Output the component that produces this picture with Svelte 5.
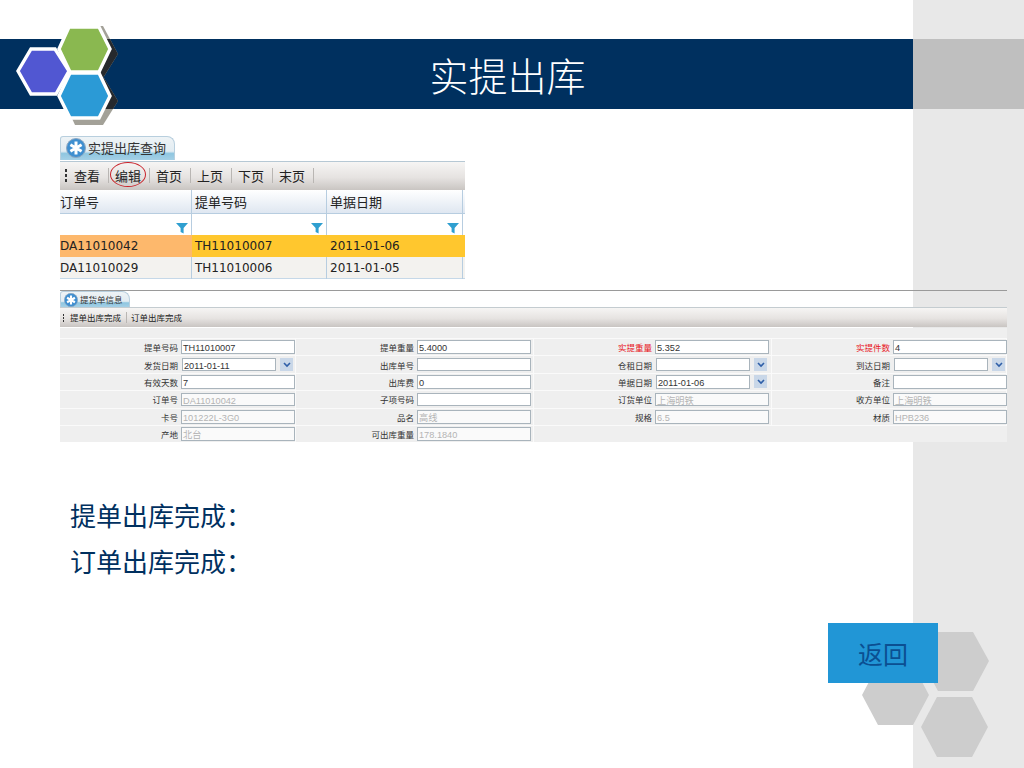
<script>
	const pager = ['查看', '编辑', '首页', '上页', '下页', '末页'];
	const columns = ['订单号', '提单号码', '单据日期'];
	const orders = [
		['DA11010042', 'TH11010007', '2011-01-06'],
		['DA11010029', 'TH11010006', '2011-01-05']
	];

	// kind: text (default), date, off (greyed out)
	const fields = [
		{ label: '提单号码', value: 'TH11010007' },
		{ label: '提单重量', value: '5.4000' },
		{ label: '实提重量', value: '5.352', red: true },
		{ label: '实提件数', value: '4', red: true },
		{ label: '发货日期', value: '2011-01-11', kind: 'date' },
		{ label: '出库单号', value: '' },
		{ label: '仓租日期', value: '', kind: 'date' },
		{ label: '到达日期', value: '', kind: 'date' },
		{ label: '有效天数', value: '7' },
		{ label: '出库费', value: '0' },
		{ label: '单据日期', value: '2011-01-06', kind: 'date' },
		{ label: '备注', value: '' },
		{ label: '订单号', value: 'DA11010042', kind: 'off' },
		{ label: '子项号码', value: '' },
		{ label: '订货单位', value: '上海明铁', kind: 'off' },
		{ label: '收方单位', value: '上海明铁', kind: 'off' },
		{ label: '卡号', value: '101222L-3G0', kind: 'off' },
		{ label: '品名', value: '高线', kind: 'off' },
		{ label: '规格', value: '6.5', kind: 'off' },
		{ label: '材质', value: 'HPB236', kind: 'off' },
		{ label: '产地', value: '北台', kind: 'off' },
		{ label: '可出库重量', value: '178.1840', kind: 'off' },
		{ label: '', value: null },
		{ label: '', value: null }
	];
</script>

{#snippet tabIcon(size)}
	<svg class="tab-icon" width={size} height={size} viewBox="0 0 20 20">
		<circle cx="10" cy="10" r="9.5" fill="#3f8fd0" stroke="#8fa8c0" />
		<path d="M10 3.5v13M4.4 6.8l11.2 6.4M15.6 6.8L4.4 13.2" stroke="#fff" stroke-width="3" />
	</svg>
{/snippet}

{#snippet funnel()}
	<svg class="funnel" width="12" height="12" viewBox="0 0 12 12">
		<path d="M0 1h12L7.6 6v5.5L4.6 10V6z" fill="#2f9fd0" />
	</svg>
{/snippet}

{#snippet grip()}
	<span class="grip"><i></i><i></i><i></i></span>
{/snippet}

<div class="slide">
	<div class="sidebar"></div>

	<svg class="hexes" width="1024" height="768" viewBox="0 0 1024 768">
		<g fill="#cdcdcd">
			<polygon points="922,661 938,632 973,632 989,661 973,691 938,691" />
			<polygon points="862,695 878,665 913,665 929,695 913,725 878,725" />
			<polygon points="921,727 937,697 972,697 988,727 972,757 937,757" />
		</g>
	</svg>

	<header class="band">
		<h1>实提出库</h1>
		<div class="band-end"></div>
	</header>

	<svg class="logo" width="125" height="130" viewBox="0 0 125 130">
		<defs>
			<clipPath id="on-band"><rect x="0" y="39" width="125" height="70" /></clipPath>
		</defs>
		<g fill="#a3a198">
			<polygon points="73,26 103,26 118,54 103,78 90,78 75,54" />
			<polygon points="75,78 104,78 118,101 103,125 75,125 64,101" />
		</g>
		<g fill="#26292d" clip-path="url(#on-band)">
			<polygon points="73,26 103,26 118,54 103,78 90,78 75,54" />
			<polygon points="75,78 104,78 118,101 103,125 75,125 64,101" />
		</g>
		<g stroke="#fff" stroke-width="3.4" stroke-linejoin="miter">
			<polygon points="31,49 55,49 69,71 56,94 31,94 18,71" fill="#5157d2" />
			<polygon points="69,27 99,27 110,49 99,72 70,72 59,49" fill="#8ab850" />
			<polygon points="70,73 99,73 110,96 99,118 70,118 59,96" fill="#2b9ad6" />
		</g>
	</svg>

	<main class="content">
		<section class="query">
			<div class="tab">
				{@render tabIcon(20)}
				<span>实提出库查询</span>
			</div>
			<div class="toolbar">
				{@render grip()}
				{#each pager as item}
					<span class="tool" class:marked={item === '编辑'}>{item}</span>
				{/each}
			</div>
			<div class="grid head">
				{#each columns as name}
					<div class="cell">{name}</div>
				{/each}
			</div>
			<div class="grid filter">
				{#each columns as name}
					<div class="cell">{@render funnel()}</div>
				{/each}
			</div>
			{#each orders as row, r}
				<div class="grid order" class:selected={r === 0}>
					{#each row as value}
						<div class="cell">{value}</div>
					{/each}
				</div>
			{/each}
		</section>

		<section class="detail">
			<div class="tab-strip">
				<div class="tab small">
					{@render tabIcon(14)}
					<span>提货单信息</span>
				</div>
			</div>
			<div class="toolbar small">
				{@render grip()}
				<span class="tool">提单出库完成</span>
				<span class="tool">订单出库完成</span>
			</div>
			<div class="form">
				<div class="form-top"></div>
				{#each fields as f}
					<div class="field" class:empty={f.value === null}>
						<span class="label" class:red={f.red}>{f.label}</span>
						{#if f.value !== null}
							<span class="input" class:off={f.kind === 'off'} class:date={f.kind === 'date'}>{f.value}</span>
							{#if f.kind === 'date'}
								<span class="drop">
									<svg width="8" height="6" viewBox="0 0 8 6">
										<path d="M1 1l3 3 3-3" fill="none" stroke="#2f5fa8" stroke-width="1.6" />
									</svg>
								</span>
							{/if}
						{/if}
					</div>
				{/each}
			</div>
		</section>

		<div class="notes">
			<p>提单出库完成：</p>
			<p>订单出库完成：</p>
		</div>

		<div class="actions">
			<button type="button">返回</button>
		</div>
	</main>
</div>

<style>
	:global(body) {
		margin: 0;
		background: #fff;
	}

	.slide {
		position: relative;
		width: 1024px;
		height: 768px;
		overflow: hidden;
		padding-top: 39px;
		box-sizing: border-box;
		font-family: "Noto Sans CJK SC", "Liberation Sans", sans-serif;
		color: #222;
	}

	.sidebar {
		position: absolute;
		top: 0;
		right: 0;
		bottom: 0;
		width: 111px;
		background: #e8e8e8;
	}

	.hexes {
		position: absolute;
		top: 0;
		left: 0;
	}

	.logo {
		position: absolute;
		top: 0;
		left: 0;
	}

	.band {
		position: relative;
		display: flex;
		height: 70px;
	}

	.band h1 {
		flex: 1;
		margin: 0;
		padding-left: 102px;
		background: #00305f;
		color: #fff;
		font-size: 39px;
		font-weight: 300;
		line-height: 70px;
		text-align: center;
	}

	.band-end {
		width: 111px;
		background: #bfbfbf;
	}

	.content {
		position: relative;
		padding: 27px 0 0 60px;
	}

	/* tabs */
	.tab {
		display: flex;
		align-items: center;
		gap: 2px;
		width: 115px;
		height: 24px;
		box-sizing: border-box;
		padding: 0 0 2px 5px;
		border: 1px solid #b8cfde;
		border-bottom: 0;
		border-radius: 3px 8px 0 0;
		background: linear-gradient(#eef3f6 0%, #e2ecf2 62%, #8fc6e0 72%, #a4d0e6 100%);
		font-size: 13px;
		line-height: 1;
		color: #333;
	}

	.tab.small {
		width: 70px;
		height: 16px;
		padding: 0 0 0 3px;
		font-size: 8.5px;
	}

	.tab-icon {
		flex: none;
	}

	.tab-strip {
		border-top: 1px solid #9a9a9a;
		border-bottom: 1px solid #c4ccd0;
	}

	/* toolbars */
	.toolbar {
		display: flex;
		align-items: center;
		height: 29px;
		margin-top: 1px;
		padding: 0 0 2px 5px;
		border-top: 1px solid #b6c8d4;
		box-sizing: border-box;
		background: linear-gradient(#f6f5f4, #e6e3e1 55%, #c9c5c2);
		font-size: 13px;
	}

	.toolbar.small {
		height: 19px;
		margin-top: 0;
		padding: 0 0 0 3px;
		border-top: 0;
		font-size: 8.5px;
	}

	.grip {
		display: flex;
		flex-direction: column;
		gap: 2px;
		margin-right: 7px;
	}

	.grip i {
		display: block;
		width: 2px;
		height: 3px;
		background: #333;
	}

	.toolbar.small .grip {
		gap: 1px;
		margin-right: 6px;
	}

	.toolbar.small .grip i {
		width: 1px;
		height: 2px;
	}

	.tool {
		position: relative;
		padding: 0 8px 0 0;
		margin-right: 6px;
		border-right: 1px solid #b9b6b3;
		line-height: 15px;
	}

	.toolbar.small .tool {
		padding-right: 5px;
		margin-right: 4px;
		line-height: 11px;
	}

	.toolbar.small .tool:last-child {
		border-right: 0;
	}

	.marked::after {
		content: "";
		position: absolute;
		top: -6px;
		left: -5px;
		width: 34px;
		height: 23px;
		border: 1px solid #c8242c;
		border-radius: 50%;
	}

	/* query table */
	.query {
		width: 405px;
	}

	.grid {
		display: grid;
		grid-template-columns: 132px 135px 136px;
	}

	.cell {
		box-sizing: border-box;
		border-right: 1px solid #b7cde0;
	}

	.head {
		height: 23px;
		background: linear-gradient(#fff, #dfe7f1);
		border-bottom: 1px solid #b7cde0;
		font-size: 13px;
		line-height: 23px;
	}

	.head .cell:not(:first-child),
	.order .cell:not(:first-child) {
		padding-left: 3px;
	}

	.filter {
		height: 21px;
	}

	.filter .cell {
		display: flex;
		align-items: flex-end;
		justify-content: flex-end;
		padding: 0 3px 1px 0;
	}

	.order {
		height: 22px;
		background: #f3f2ef;
		font-family: "DejaVu Sans", sans-serif;
		font-size: 12px;
		line-height: 22px;
		border-bottom: 1px solid #c5d8e8;
		box-sizing: border-box;
	}

	.order.selected {
		background: #ffc72e;
		border-bottom: 0;
	}

	.order.selected .cell {
		border-right-color: transparent;
	}

	.order.selected .cell:first-child {
		background: #fdb86c;
	}

	/* detail form */
	.detail {
		width: 947px;
		margin-top: 11px;
	}

	.form {
		display: grid;
		grid-template-columns: 236px 238px 238px 235px;
		grid-template-rows: 10px repeat(6, 17.4px);
		margin-top: 1px;
		background: #efefef;
	}

	.form-top {
		grid-column: 1 / -1;
	}

	.field {
		display: flex;
		align-items: center;
		box-sizing: border-box;
		border-top: 1px solid #fafafa;
		border-right: 1px solid #fafafa;
		font-size: 8.5px;
	}

	.field.empty {
		border-right: 0;
	}

	.label {
		flex: none;
		width: 118px;
		margin-right: 3px;
		text-align: right;
		color: #333;
		white-space: nowrap;
	}

	.label.red {
		color: #e8141c;
	}

	.input {
		flex: none;
		box-sizing: border-box;
		width: 114px;
		height: 13.5px;
		padding: 1px 0 0 1px;
		border: 1px solid #a9b4bc;
		background: #fff;
		font-family: "Liberation Sans", "Noto Sans CJK SC", sans-serif;
		font-size: 9.2px;
		line-height: 12px;
		overflow: hidden;
		color: #333;
	}

	.input.date {
		width: 94px;
		margin-left: 1px;
	}

	.input.off {
		color: #b4b4b4;
		background: #fafafa;
	}

	.drop {
		display: flex;
		align-items: center;
		justify-content: center;
		width: 13px;
		height: 13px;
		margin-left: 4px;
		background: #c9d7e8;
	}

	/* bottom of the slide */
	.notes {
		margin: 50px 0 0 10px;
		font-size: 26px;
		line-height: 46px;
		color: #00305f;
	}

	.notes p {
		margin: 0;
	}

	.actions {
		display: flex;
		justify-content: flex-end;
		padding-right: 86px;
		margin-top: 39px;
	}

	button {
		width: 110px;
		height: 60px;
		padding: 0;
		border: 0;
		background: #2196d6;
		color: #0b4f92;
		font-family: inherit;
		font-size: 25px;
	}
</style>
